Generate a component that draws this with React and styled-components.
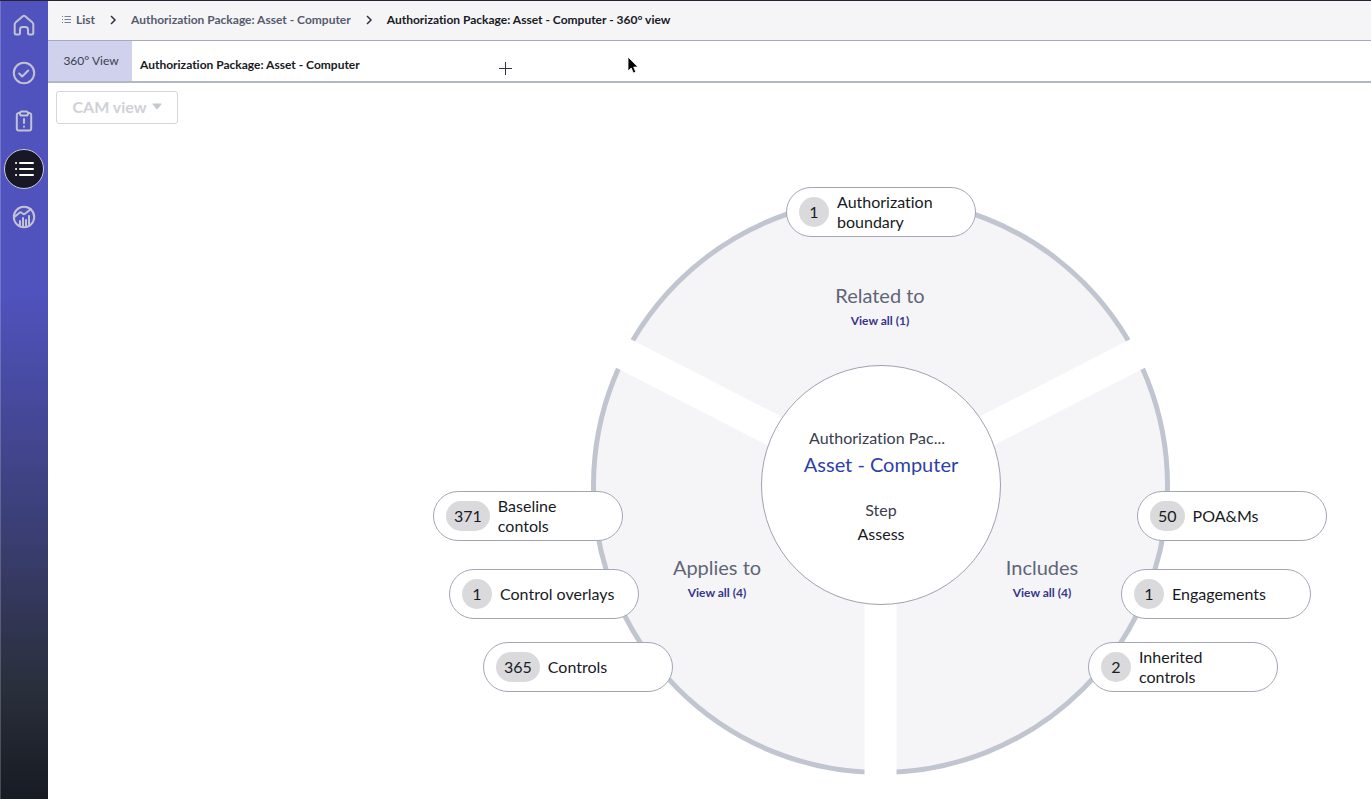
import React from "react";
import styled, { createGlobalStyle } from "styled-components";

const GlobalStyle = createGlobalStyle`
  *, *::before, *::after { box-sizing: border-box; }
  body {
    margin: 0;
    background: #ffffff;
    color: #181a24;
    font-family: Lato, "Liberation Sans", sans-serif;
    font-size: 16px;
    font-variant-ligatures: none;
  }
  a { color: inherit; text-decoration: none; }
  button { font: inherit; color: inherit; cursor: pointer; font-variant-ligatures: none; }
`;

const Shell = styled.div`
  display: flex;
  min-height: 100vh;
  border-top: 1px solid #262433;
`;

const Sidebar = styled.nav`
  flex: 0 0 48px;
  display: flex;
  flex-direction: column;
  align-items: center;
  gap: 8px;
  padding-top: 4px;
  box-shadow: inset 1px 0 rgba(255, 255, 255, 0.2);
  background: linear-gradient(#5052bd 0%, #5052bd 37%, #3a3e72 67%, #2a2f3c 86%, #171b22 100%);
`;

const NavButton = styled.button`
  display: flex;
  align-items: center;
  justify-content: center;
  width: 40px;
  height: 40px;
  padding: 0;
  border: 1px solid ${(p) => (p.$active ? "#c9c9d6" : "transparent")};
  border-radius: 50%;
  background: ${(p) => (p.$active ? "#171726" : "transparent")};
  color: ${(p) => (p.$active ? "#ffffff" : "#c2c3d2")};
`;

const Content = styled.div`
  flex: 1;
  min-width: 0;
  display: flex;
  flex-direction: column;
`;

const Breadcrumbs = styled.nav`
  display: flex;
  align-items: center;
  height: 40px;
  padding: 0 14px 2px;
  gap: 12px;
  border-bottom: 1px solid #a5acb9;
  background: #f5f5f8;
  font-size: 12px;
  font-weight: 700;
  line-height: 20px;
  white-space: nowrap;
`;

const Crumb = styled.a`
  display: flex;
  align-items: center;
  gap: 5px;
  color: ${(p) => (p.$current ? "#181a24" : "#555b6b")};
`;

const TabBar = styled.div`
  display: flex;
  height: 42px;
  border-bottom: 2px solid #b3b8c6;
  font-size: 12px;
  line-height: 20px;
  white-space: nowrap;
`;

const ViewTab = styled.button`
  width: 84px;
  padding: 0 0 0 2px;
  border: 0;
  background: #d0d1ed;
  color: #3a3d4c;
`;

const RecordTab = styled.button`
  width: 359px;
  padding: 8px 8px 0;
  border: 0;
  background: transparent;
  font-weight: 700;
  text-align: left;
`;

const AddTab = styled.button`
  display: flex;
  align-items: center;
  padding: 14px 8px 0;
  border: 0;
  background: transparent;
`;

const Toolbar = styled.div`
  padding: 8px;
`;

const ViewMenu = styled.button`
  display: flex;
  align-items: center;
  justify-content: center;
  gap: 5px;
  width: 122px;
  height: 33px;
  padding: 0 0 2px;
  border: 1px solid #d6d6da;
  border-radius: 3px;
  background: #ffffff;
  color: #d0d1d6;
  font-weight: 700;
`;

const Canvas = styled.main`
  display: flex;
  justify-content: flex-end;
  padding: 55px 42px 24px;
`;

const Stage = styled.div`
  position: relative;
  flex: none;
  width: 896px;
  height: 588px;
`;

const Wheel = styled.svg`
  display: block;
  width: 100%;
  height: 100%;
`;

const Hub = styled.section`
  position: absolute;
  left: 328px;
  top: 178px;
  width: 240px;
  height: 240px;
  padding-top: 60px;
  border: 1px solid #9da2b1;
  border-radius: 50%;
  background: #ffffff;
  color: #3a404e;
  line-height: 24px;
  text-align: center;
`;

const HubType = styled.div`
  padding-right: 8px;
`;

const HubLink = styled.a`
  display: block;
  margin-bottom: 20px;
  color: #2f3fa8;
  font-size: 20px;
  line-height: 28px;
`;

const HubValue = styled.div`
  color: #181a24;
`;

const Sector = styled.section`
  position: absolute;
  left: ${(p) => p.$x}px;
  top: ${(p) => p.$y}px;
  width: 160px;
  text-align: center;
`;

const SectorTitle = styled.h2`
  margin: 0;
  color: #5f6577;
  font-size: 20px;
  font-weight: 400;
  line-height: 28px;
`;

const ViewAll = styled.a`
  color: #37368a;
  font-size: 12px;
  font-weight: 700;
  line-height: 20px;
`;

const Pill = styled.button`
  position: absolute;
  left: ${(p) => p.$x}px;
  top: ${(p) => p.$y}px;
  display: flex;
  align-items: center;
  gap: 8px;
  width: 190px;
  height: 50px;
  padding: 0 12px;
  border: 1px solid #a2a6b6;
  border-radius: 25px;
  background: #ffffff;
  line-height: 20px;
  text-align: left;
`;

const Count = styled.span`
  flex: none;
  min-width: 30px;
  padding: 0 8px;
  border-radius: 15px;
  background: #dadadc;
  line-height: 30px;
  text-align: center;
`;

const PillLabel = styled.span`
  max-width: ${(p) => (p.$wrap ? "100px" : "none")};
  white-space: ${(p) => (p.$wrap ? "normal" : "nowrap")};
`;

const Pointer = styled.svg`
  position: absolute;
  left: 627px;
  top: 56px;
`;

const stroke = { fill: "none", stroke: "currentColor", strokeWidth: 2, strokeLinecap: "round", strokeLinejoin: "round" };

const HomeIcon = () => (
  <svg width="24" height="24" viewBox="0 0 24 24" {...stroke} aria-hidden="true">
    <path d="M2.700 11.300c0-.7.3-1.200.8-1.700L10.800 3.200c.7-.6 1.700-.6 2.400 0l7.300 6.400c.5.500.8 1 .8 1.700V20c0 .9-.6 1.500-1.500 1.500h-2.500c-.8 0-1.300-.5-1.300-1.300v-3.600a2.500 2.500 0 0 0-2.500-2.500h-3a2.500 2.500 0 0 0-2.500 2.500v3.600c0 .8-.5 1.300-1.300 1.300H4.200c-.9 0-1.500-.6-1.500-1.500z" />
  </svg>
);

const CheckIcon = () => (
  <svg width="24" height="24" viewBox="0 0 24 24" {...stroke} aria-hidden="true">
    <circle cx="12" cy="12" r="10.200" />
    <path d="M7.200 12.500l3 3 6-6" />
  </svg>
);

const ClipboardIcon = () => (
  <svg width="24" height="24" viewBox="0 0 24 24" {...stroke} aria-hidden="true">
    <path d="M8 4H6.500A2 2 0 0 0 4.800 6v13.500a2 2 0 0 0 2 2h10.400a2 2 0 0 0 2-2V6a2 2 0 0 0-1.700-2H16" />
    <rect x="8" y="2.500" width="8" height="4" rx="1.800" />
    <path d="M12 10v4M12 17.500v.2" />
  </svg>
);

const ListIcon = () => (
  <svg width="24" height="24" viewBox="0 0 24 24" {...stroke} aria-hidden="true">
    <path d="M8 6H21M8 12H21M8 18H21M4 6h.1M4 12h.1M4 18h.1" />
  </svg>
);

const AnalyticsIcon = () => (
  <svg width="24" height="24" viewBox="0 0 24 24" {...stroke} aria-hidden="true">
    <circle cx="12" cy="12" r="10.200" />
    <path d="M3 11.500l4.500-3.800q1-.7 2 0l1.500 1.100q1 .7 2-.1L19 4M8 21v-5M11 22v-9M14 22v-7M17 20.500V11" />
  </svg>
);

const Chevron = () => (
  <svg width="12" height="12" viewBox="0 0 12 12" fill="none" stroke="#303442" strokeWidth="1.500" aria-hidden="true">
    <path d="M4 2l4 4-4 4" />
  </svg>
);

const navItems = [
  { label: "Home", Icon: HomeIcon },
  { label: "Tasks", Icon: CheckIcon },
  { label: "Issues", Icon: ClipboardIcon },
  { label: "Lists", Icon: ListIcon, active: true },
  { label: "Analytics", Icon: AnalyticsIcon },
];

const sectors = [
  { title: "Related to", total: 1, x: 367, y: 94 },
  { title: "Applies to", total: 4, x: 204, y: 366 },
  { title: "Includes", total: 4, x: 529, y: 366 },
];

const pills = [
  { count: 1, label: "Authorization boundary", x: 353, y: 0, wrap: true },
  { count: 371, label: "Baseline contols", x: 0, y: 304, wrap: true },
  { count: 1, label: "Control overlays", x: 16, y: 382 },
  { count: 365, label: "Controls", x: 50, y: 455 },
  { count: 50, label: "POA&Ms", x: 704, y: 304 },
  { count: 1, label: "Engagements", x: 688, y: 382 },
  { count: 2, label: "Inherited controls", x: 655, y: 455, wrap: true },
];

export default function App() {
  return (
    <>
      <GlobalStyle />
      <Shell>
        <Sidebar aria-label="Workspace">
          {navItems.map(({ label, Icon, active }) => (
            <NavButton key={label} aria-label={label} $active={active}>
              <Icon />
            </NavButton>
          ))}
        </Sidebar>
        <Content>
          <Breadcrumbs aria-label="Breadcrumb">
            <Crumb href="#list">
              <svg width="9" height="10" viewBox="0 0 9 10" stroke="#7b8190" aria-hidden="true">
                <path d="M0 1.500h1M2.500 1.500H9M0 4.500h1M2.500 4.500H9M0 7.500h1M2.500 7.500H9" />
              </svg>
              List
            </Crumb>
            <Chevron />
            <Crumb href="#record">Authorization Package: Asset - Computer</Crumb>
            <Chevron />
            <Crumb href="#view" $current>Authorization Package: Asset - Computer - 360° view</Crumb>
          </Breadcrumbs>
          <TabBar>
            <ViewTab>360° View</ViewTab>
            <RecordTab>Authorization Package: Asset - Computer</RecordTab>
            <AddTab aria-label="Add tab">
              <svg width="13" height="13" viewBox="0 0 13 13" stroke="#303442" aria-hidden="true">
                <path d="M6.500 0v13M0 6.500h13" />
              </svg>
            </AddTab>
          </TabBar>
          <Toolbar>
            <ViewMenu>
              CAM view
              <svg width="10" height="7" viewBox="0 0 10 7" aria-hidden="true">
                <path d="M1 .5h8q1 0 .4.800L5.600 6q-.6.700-1.200 0L.6 1.300Q0 .5 1 .5z" fill="#c6c8cf" />
              </svg>
            </ViewMenu>
          </Toolbar>
          <Canvas>
            <Stage>
              <Wheel viewBox="0 0 896 588" aria-hidden="true">
                <g transform="translate(447.500 298.500)">
                  <circle r="287" fill="#f5f5f8" stroke="#c0c5cf" strokeWidth="5" />
                  <path d="M0 0V300M0 0L-266.800 -137.100M0 0L266.800 -137.100" stroke="#fff" strokeWidth="32" />
                </g>
              </Wheel>
              <Hub>
                <HubType>Authorization Pac...</HubType>
                <HubLink href="#asset">Asset - Computer</HubLink>
                <div>Step</div>
                <HubValue>Assess</HubValue>
              </Hub>
              {sectors.map((s) => (
                <Sector key={s.title} $x={s.x} $y={s.y}>
                  <SectorTitle>{s.title}</SectorTitle>
                  <ViewAll href="#all">View all ({s.total})</ViewAll>
                </Sector>
              ))}
              {pills.map((p) => (
                <Pill key={p.label} $x={p.x} $y={p.y}>
                  <Count>{p.count}</Count>
                  <PillLabel $wrap={p.wrap}>{p.label}</PillLabel>
                </Pill>
              ))}
            </Stage>
          </Canvas>
        </Content>
      </Shell>
      <Pointer width="12" height="19" viewBox="0 0 12 19" aria-hidden="true">
        <path d="M1 1v14l3.200-3 2.200 5 2.400-1-2.100-4.900H11z" fill="#000" stroke="#fff" strokeWidth="0.800" />
      </Pointer>
    </>
  );
}
